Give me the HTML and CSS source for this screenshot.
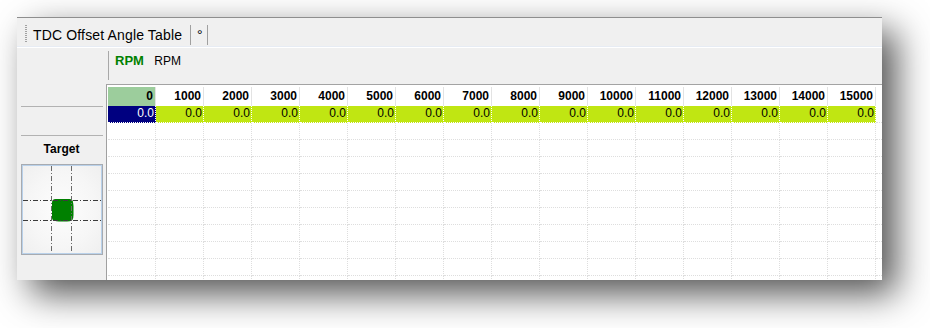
FILE: index.html
```html
<!DOCTYPE html>
<html>
<head>
<meta charset="utf-8">
<title>TDC Offset Angle Table</title>
<link rel="stylesheet" href="styles.css">
</head>
<body>
<div class="window">
  <div class="toolbar">
    <span class="grip"></span>
    <span class="title">TDC Offset Angle Table</span>
    <span class="sep"></span>
    <span class="unit">°</span>
    <span class="sep"></span>
  </div>
  <div class="axis-bar">
    <div class="axis-spacer"></div>
    <div class="axis-area">
      <div class="axis-box">
        <span class="axis-name">RPM</span>
        <span class="axis-unit">RPM</span>
      </div>
    </div>
  </div>
  <div class="body">
    <div class="side">
      <div class="side-line"></div>
      <div class="side-gap"></div>
      <div class="side-line"></div>
      <div class="target-label">Target</div>
      <div class="target-box">
        <div class="target-inner">
          <svg class="target-svg" width="78" height="87" viewBox="0 0 78 87">
            <rect x="29" y="33" width="22" height="23" rx="7" fill="#4fa84f" opacity="0.75"/>
            <rect x="29" y="33" width="21" height="22" rx="3.5" fill="#008000"/>
            <line x1="28.5" y1="0" x2="28.5" y2="87" stroke="#6a6a6a" stroke-width="1" stroke-dasharray="5 2 1 2"/>
            <line x1="48.5" y1="0" x2="48.5" y2="87" stroke="#6a6a6a" stroke-width="1" stroke-dasharray="5 2 1 2"/>
            <line x1="0" y1="34.5" x2="78" y2="34.5" stroke="#3c3c3c" stroke-width="1" stroke-dasharray="5 2 1 2"/>
            <line x1="0" y1="54.5" x2="78" y2="54.5" stroke="#3c3c3c" stroke-width="1" stroke-dasharray="5 2 1 2"/>
          </svg>
        </div>
      </div>
    </div>
    <div class="grid">
      <div class="row head">
        <div class="cell first">0</div>
        <div class="cell">1000</div>
        <div class="cell">2000</div>
        <div class="cell">3000</div>
        <div class="cell">4000</div>
        <div class="cell">5000</div>
        <div class="cell">6000</div>
        <div class="cell">7000</div>
        <div class="cell">8000</div>
        <div class="cell">9000</div>
        <div class="cell">10000</div>
        <div class="cell">11000</div>
        <div class="cell">12000</div>
        <div class="cell">13000</div>
        <div class="cell">14000</div>
        <div class="cell">15000</div>
        <div class="fill"></div>
      </div>
      <div class="row data">
        <div class="cell selected">0.0</div>
        <div class="cell">0.0</div>
        <div class="cell">0.0</div>
        <div class="cell">0.0</div>
        <div class="cell">0.0</div>
        <div class="cell">0.0</div>
        <div class="cell">0.0</div>
        <div class="cell">0.0</div>
        <div class="cell">0.0</div>
        <div class="cell">0.0</div>
        <div class="cell">0.0</div>
        <div class="cell">0.0</div>
        <div class="cell">0.0</div>
        <div class="cell">0.0</div>
        <div class="cell">0.0</div>
        <div class="cell">0.0</div>
        <div class="fill"></div>
      </div>
      <div class="row empty"><div class="cell"></div><div class="cell"></div><div class="cell"></div><div class="cell"></div><div class="cell"></div><div class="cell"></div><div class="cell"></div><div class="cell"></div><div class="cell"></div><div class="cell"></div><div class="cell"></div><div class="cell"></div><div class="cell"></div><div class="cell"></div><div class="cell"></div><div class="cell"></div><div class="fill"></div></div>
      <div class="row empty"><div class="cell"></div><div class="cell"></div><div class="cell"></div><div class="cell"></div><div class="cell"></div><div class="cell"></div><div class="cell"></div><div class="cell"></div><div class="cell"></div><div class="cell"></div><div class="cell"></div><div class="cell"></div><div class="cell"></div><div class="cell"></div><div class="cell"></div><div class="cell"></div><div class="fill"></div></div>
      <div class="row empty"><div class="cell"></div><div class="cell"></div><div class="cell"></div><div class="cell"></div><div class="cell"></div><div class="cell"></div><div class="cell"></div><div class="cell"></div><div class="cell"></div><div class="cell"></div><div class="cell"></div><div class="cell"></div><div class="cell"></div><div class="cell"></div><div class="cell"></div><div class="cell"></div><div class="fill"></div></div>
      <div class="row empty"><div class="cell"></div><div class="cell"></div><div class="cell"></div><div class="cell"></div><div class="cell"></div><div class="cell"></div><div class="cell"></div><div class="cell"></div><div class="cell"></div><div class="cell"></div><div class="cell"></div><div class="cell"></div><div class="cell"></div><div class="cell"></div><div class="cell"></div><div class="cell"></div><div class="fill"></div></div>
      <div class="row empty"><div class="cell"></div><div class="cell"></div><div class="cell"></div><div class="cell"></div><div class="cell"></div><div class="cell"></div><div class="cell"></div><div class="cell"></div><div class="cell"></div><div class="cell"></div><div class="cell"></div><div class="cell"></div><div class="cell"></div><div class="cell"></div><div class="cell"></div><div class="cell"></div><div class="fill"></div></div>
      <div class="row empty"><div class="cell"></div><div class="cell"></div><div class="cell"></div><div class="cell"></div><div class="cell"></div><div class="cell"></div><div class="cell"></div><div class="cell"></div><div class="cell"></div><div class="cell"></div><div class="cell"></div><div class="cell"></div><div class="cell"></div><div class="cell"></div><div class="cell"></div><div class="cell"></div><div class="fill"></div></div>
      <div class="row empty"><div class="cell"></div><div class="cell"></div><div class="cell"></div><div class="cell"></div><div class="cell"></div><div class="cell"></div><div class="cell"></div><div class="cell"></div><div class="cell"></div><div class="cell"></div><div class="cell"></div><div class="cell"></div><div class="cell"></div><div class="cell"></div><div class="cell"></div><div class="cell"></div><div class="fill"></div></div>
      <div class="row empty"><div class="cell"></div><div class="cell"></div><div class="cell"></div><div class="cell"></div><div class="cell"></div><div class="cell"></div><div class="cell"></div><div class="cell"></div><div class="cell"></div><div class="cell"></div><div class="cell"></div><div class="cell"></div><div class="cell"></div><div class="cell"></div><div class="cell"></div><div class="cell"></div><div class="fill"></div></div>
      <div class="row empty"><div class="cell"></div><div class="cell"></div><div class="cell"></div><div class="cell"></div><div class="cell"></div><div class="cell"></div><div class="cell"></div><div class="cell"></div><div class="cell"></div><div class="cell"></div><div class="cell"></div><div class="cell"></div><div class="cell"></div><div class="cell"></div><div class="cell"></div><div class="cell"></div><div class="fill"></div></div>
      <div class="row empty"><div class="cell"></div><div class="cell"></div><div class="cell"></div><div class="cell"></div><div class="cell"></div><div class="cell"></div><div class="cell"></div><div class="cell"></div><div class="cell"></div><div class="cell"></div><div class="cell"></div><div class="cell"></div><div class="cell"></div><div class="cell"></div><div class="cell"></div><div class="cell"></div><div class="fill"></div></div>
    </div>
  </div>
</div>
</body>
</html>
```

FILE: styles.css
```css
html, body {
  margin: 0;
  padding: 0;
  background: #ffffff;
}

body {
  font-family: "Liberation Sans", Arial, sans-serif;
  color: #000;
  min-height: 328px;
}

.window {
  margin: 17px 0 0 17px;
  width: 865px;
  height: 263px;
  box-sizing: border-box;
  background: #f0f0f0;
  border-top: 1px solid #8e8e8e;
  box-shadow: 14px 14px 34px rgba(0, 0, 0, 0.68);
  display: flex;
  flex-direction: column;
  overflow: hidden;
}

/* toolbar */
.toolbar {
  height: 29px;
  box-sizing: border-box;
  padding: 7px 0 0 8px;
  display: flex;
  align-items: flex-start;
  border-bottom: 1px solid #e7ecf4;
  flex: none;
}

.grip {
  width: 2px;
  height: 18px;
  background: repeating-linear-gradient(to bottom, #a2a2a2 0 1px, transparent 1px 2px);
}

.title {
  margin-left: 6px;
  font-size: 14px;
  letter-spacing: 0.15px;
  line-height: 20px;
  height: 20px;
  white-space: nowrap;
}

.sep {
  width: 1px;
  height: 20px;
  background: #a0a0a0;
  margin-left: 8px;
}

.unit + .sep {
  margin-left: 0;
}

.unit {
  font-size: 14px;
  line-height: 20px;
  padding: 0 4px 0 6px;
}

/* axis bar */
.axis-bar {
  display: flex;
  height: 38px;
  border-top: 1px solid #ffffff;
  box-sizing: border-box;
  flex: none;
}

.axis-spacer {
  width: 89px;
  flex: none;
}

.axis-area {
  flex: 1;
  border-bottom: 1px solid #a3a3a3;
  padding: 3px 0 0 2px;
}

.axis-box {
  height: 29px;
  border-left: 1px solid #a8a8a8;
  padding-left: 6px;
  white-space: nowrap;
}

.axis-name {
  color: #008000;
  font-weight: bold;
  font-size: 13px;
  line-height: 15px;
}

.axis-unit {
  font-size: 12px;
  line-height: 15px;
  margin-left: 6px;
}

/* body */
.body {
  flex: 1;
  display: flex;
  min-height: 0;
}

.side {
  width: 89px;
  flex: none;
  border-right: 1px solid #a0a0a0;
  padding-top: 21px;
  display: flex;
  flex-direction: column;
}

.side-line {
  height: 1px;
  background: #b2b2b2;
  margin: 0 3px 0 4px;
}

.side-gap {
  height: 28px;
}

.target-label {
  margin-top: 6px;
  font-size: 12px;
  font-weight: bold;
  line-height: 15px;
  text-align: center;
}

.target-box {
  margin: 7px 0 0 4px;
  width: 82px;
  height: 91px;
  box-sizing: border-box;
  border: 1px solid #a7abb1;
}

.target-inner {
  height: 100%;
  box-sizing: border-box;
  border: 1px solid #b9d1ea;
  background: radial-gradient(ellipse at center, #fdfdfd 0%, #f6f6f6 60%, #efefef 100%);
}

.target-svg {
  display: block;
}

/* grid */
.grid {
  flex: 1;
  background: #ffffff;
  padding: 2px 0 0 1px;
  overflow: hidden;
}

.row {
  display: flex;
}

.cell {
  width: 48px;
  flex: none;
  box-sizing: border-box;
  text-align: right;
  font-size: 12px;
  white-space: nowrap;
}

.fill {
  flex: 1;
}

.head {
  height: 19px;
}

.head .cell {
  border-right: 1px solid #e3e3e3;
  font-weight: bold;
  line-height: 19px;
  padding-right: 2px;
}

.head .cell.first {
  background: #9ccd9c;
}

.data {
  height: 17px;
}

.data .cell {
  background: #c0e612;
  border-right: 1px dotted #ffffff;
  border-bottom: 1px dotted #ffffff;
  line-height: 15px;
  padding-right: 1px;
}

.data .cell.selected {
  background: #000080;
  color: #ffffff;
}

.data .fill,
.empty .fill {
  border-bottom: 1px dotted #dedede;
}

.empty {
  height: 17px;
}

.empty .cell {
  border-right: 1px dotted #dedede;
  border-bottom: 1px dotted #dedede;
}
```
